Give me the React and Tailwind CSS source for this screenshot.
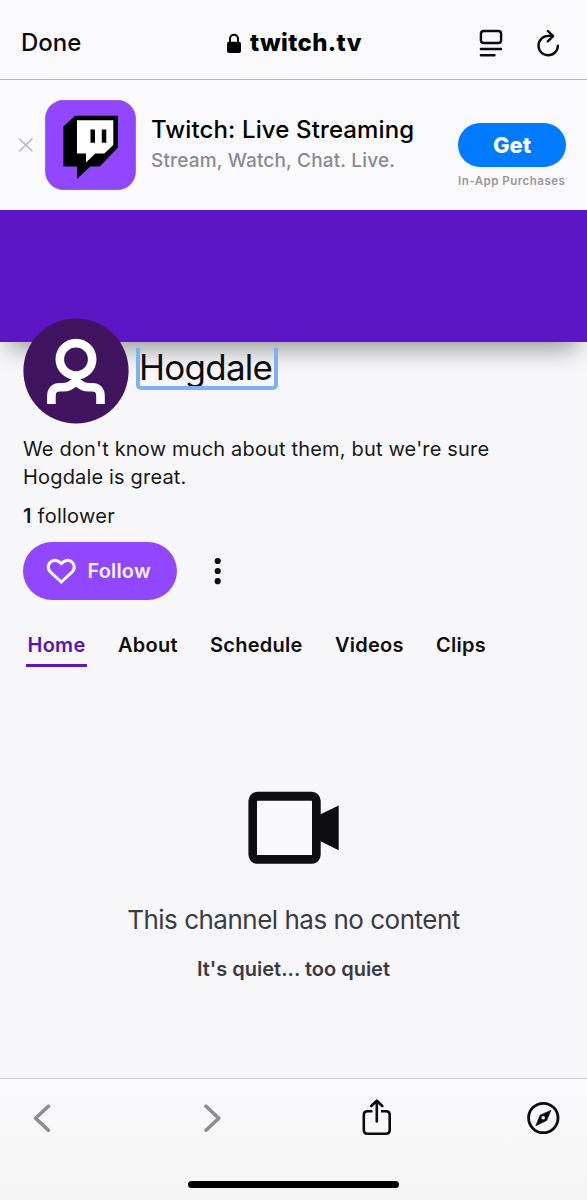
import React from 'react';

function TopBar() {
  return (
    <header className="flex h-20 shrink-0 items-center border-b border-[#b9b9bc] bg-[#fafafc] pl-[21px] pr-[27px] pt-[7px]">
      <span className="w-[205px] text-[24px] font-medium leading-[30px] text-[#0b0b0d]">Done</span>
      <svg className="mr-[8px] h-[21px] w-[16px]" viewBox="0 0 16 21">
        <path d="M4 10V5.8a4 4 0 0 1 8 0V10" fill="none" stroke="#000" strokeWidth="2" />
        <rect x="1" y="8.8" width="14" height="11.2" rx="2" />
      </svg>
      <span className="w-[229px] text-[24px] font-extrabold leading-[30px] tracking-[0.35px] text-black">twitch.tv</span>
      <svg className="h-[28px] w-[24px] shrink-0" viewBox="0 0 24 28" fill="none" stroke="#0b0b0d" strokeWidth="2.4" strokeLinecap="round">
        <rect x="1.9" y="2" width="20.2" height="12" rx="2.8" />
        <path d="M1.9 20H22M1.9 26.2H15.5" />
      </svg>
      <svg className="ml-auto h-[28px] w-[24px] shrink-0" viewBox="536 29 24 28" fill="none" stroke="#0b0b0d" strokeWidth="2.4" strokeLinecap="round" strokeLinejoin="round">
        <path d="M553 36.1Q550.5 35.6 548.1 35.9A9.7 9.7 0 1 0 557.9 45.6M547.8 31L553.1 36.2L547.8 41.4" />
      </svg>
    </header>
  );
}

function AppBanner() {
  return (
    <section className="relative z-10 flex h-[130px] shrink-0 bg-[#fafafc]">
      <svg className="ml-[18px] mt-[57px] h-[15px] w-[15px]" viewBox="0 0 15 15" stroke="#b7b7ba" strokeWidth="1.5" strokeLinecap="round">
        <path d="M1.5 2L14 14M14 2L1.5 14" />
      </svg>
      <svg className="ml-[12px] mt-[20px] h-[90px] w-[91px] shrink-0" viewBox="45 100 91 90">
        <rect x="45.5" y="100.3" width="90" height="89.4" rx="18" fill="#9146ff" stroke="#8240e6" strokeWidth=".6" />
        <path d="M75 115.8H118V147.6L99.8 166.4H90.2L77 179V166.4H63.4V126.4Z" fill="#000" />
        <path d="M77 120.3H113.3V145L104.3 153.5H95.3L86 162.5V153.5H77Z" fill="#fff" />
        <path d="M90.5 129.4H95V142.8H90.5ZM101.8 129.4H106.3V142.8H101.8Z" fill="#000" />
      </svg>
      <div className="ml-[15px] w-[307px] pt-[35px]">
        <h2 className="whitespace-nowrap text-[24px] font-medium leading-[30px] tracking-[0.12px] text-black">Twitch: Live Streaming</h2>
        <p className="mt-[4px] whitespace-nowrap text-[19px] font-medium leading-[24px] tracking-[0.17px] text-[#8b8b8e]">Stream, Watch, Chat. Live.</p>
      </div>
      <div className="w-[109px] pt-[43px]">
        <button className="block h-[44px] w-[108px] rounded-full bg-[#007aff] text-[22px] font-extrabold leading-[44px] text-white">Get</button>
        <p className="mt-[7px] whitespace-nowrap text-[11.5px] font-semibold leading-[15px] tracking-[0.5px] text-[#98989b]">In-App Purchases</p>
      </div>
    </section>
  );
}

function Avatar() {
  return (
    <svg className="relative -mt-[24px] h-[106px] w-[106px] shrink-0" viewBox="23 318 106 106">
      <circle cx="76" cy="371" r="52.6" fill="#41145f" />
      <circle cx="76" cy="359.3" r="16.2" fill="none" stroke="#fff" strokeWidth="8.6" />
      <path d="M51.4 404V396Q51.4 387.3 60 387.3H63Q70 387.3 76 381Q82 387.3 89 387.3H92Q100.5 387.3 100.5 396V404" fill="none" stroke="#fff" strokeWidth="8.6" />
    </svg>
  );
}

function Tabs() {
  return (
    <nav className="mt-[31px] flex text-[20px] font-semibold leading-[28px] tracking-[0.25px] text-[#0e0e10]">
      <span className="ml-[3px] h-[36px] w-[61px] border-b-[3px] border-[#5c16c5] text-center text-[#5416b5]">Home</span>
      <span className="ml-[31px] w-[92px]">About</span>
      <span className="w-[125px]">Schedule</span>
      <span className="w-[101px]">Videos</span>
      <span>Clips</span>
    </nav>
  );
}

function BottomBar() {
  return (
    <footer className="flex h-[122px] shrink-0 flex-col border-t border-[#cdcdd1] bg-gradient-to-b from-[#fafafc] to-[#f5f5f5]">
      <div className="flex h-[78px] items-center pl-[33px] pr-[26px]">
        <svg className="h-[28px] w-[18px]" viewBox="33 1104 18 28" fill="none" stroke="#8d8d8f" strokeWidth="3.6" strokeLinecap="round" strokeLinejoin="round">
          <path d="M48.4 1106.2L35.6 1118.2L48.4 1130.2" />
        </svg>
        <svg className="ml-[153px] h-[28px] w-[18px]" viewBox="204 1104 18 28" fill="none" stroke="#8d8d8f" strokeWidth="3.6" strokeLinecap="round" strokeLinejoin="round">
          <path d="M206 1106.2L218.8 1118.2L206 1130.2" />
        </svg>
        <svg className="ml-[140px] h-[38px] w-[30px]" viewBox="362 1099 30 38" fill="none" stroke="#0b0b0d" strokeWidth="2.6" strokeLinecap="round" strokeLinejoin="round">
          <path d="M372.5 1111.3H367.5Q363.8 1111.3 363.8 1115V1130Q363.8 1133.8 367.5 1133.8H386Q389.7 1133.8 389.7 1130V1115Q389.7 1111.3 386 1111.3H381" strokeLinecap="butt" />
          <path d="M376.8 1121.5V1101M371.3 1106L376.8 1100.7L382.3 1106" />
        </svg>
        <svg className="ml-auto h-[34px] w-[34px]" viewBox="527 1101 34 34">
          <circle cx="543.3" cy="1118" r="14.7" fill="none" stroke="#0b0b0d" strokeWidth="2.8" />
          <path fillRule="evenodd" fill="#0b0b0d" d="M551 1110.2L546.7 1120.6L535.8 1125.8L540 1115.2ZM543.2 1115.8a2 2 0 1 0 .01 0Z" stroke="#0b0b0d" strokeWidth=".6" strokeLinejoin="round" />
        </svg>
      </div>
      <div className="ml-[188px] mt-[24px] h-[7px] w-[211px] rounded-full bg-black" />
    </footer>
  );
}

export default function App() {
  return (
    <div className="flex h-[1200px] w-[587px] flex-col overflow-hidden bg-[#f7f7f9] font-['Inter',sans-serif]">
      <TopBar />
      <AppBanner />
      <div className="relative h-[132px] shrink-0 bg-[#5c16c5] shadow-[0_16px_24px_-10px_rgba(0,0,0,0.42)]" />
      <main className="flex min-h-0 flex-1 flex-col pl-[23px]">
        <div className="flex h-[82px]">
          <Avatar />
          <div className="relative ml-[7px] mt-[6px] h-[42px] w-[142px] overflow-hidden rounded-b-[5px] border-x-4 border-b-4 border-[#7db2f2]">
            <h1 className="-ml-px -mt-[3px] whitespace-nowrap text-[35px] font-normal leading-[44px] tracking-[-0.75px] text-[#0e0e10]">Hogdale</h1>
          </div>
        </div>
        <p className="mt-[11px] w-[480px] text-[20px] leading-[28px] tracking-[0.17px] text-[#18181b]">
          We don't know much about them, but we're sure<br />Hogdale is great.
        </p>
        <p className="mt-[11px] text-[20px] leading-[28px] tracking-[0.25px] text-[#18181b]"><b className="font-semibold">1</b> follower</p>
        <div className="mt-[12px] flex h-[58px] items-center">
          <button className="flex h-[58px] w-[154px] items-center rounded-full bg-[#9146ff] pl-[23px] text-[20px] font-semibold tracking-[0.15px] text-[#f7f0ff]">
            <svg className="mr-[11.5px] h-[26px] w-[30px]" viewBox="46 558 30 26" fill="none" stroke="#fff" strokeWidth="3" strokeLinejoin="miter">
              <path d="M61.3 563.5L59.5 562Q54 558.5 50 562.5Q46.5 567 50 571.5L61.3 582L72.6 571.5Q76 567 72.5 562.5Q68.5 558.5 63.1 562Z" />
            </svg>
            Follow
          </button>
          <svg className="ml-[37px] h-[28px] w-[8px]" viewBox="0 0 8 28" fill="#0e0e10">
            <circle cx="3.7" cy="4" r="3.1" /><circle cx="3.7" cy="14" r="3.1" /><circle cx="3.7" cy="24.2" r="3.1" />
          </svg>
        </div>
        <Tabs />
        <div className="-ml-[23px] mt-[124px] flex flex-col items-center">
          <svg className="h-[74px] w-[92px]" viewBox="248 791 92 74">
            <rect x="252.9" y="796.3" width="63.3" height="63" rx="4.5" fill="none" stroke="#0e0e10" strokeWidth="9" />
            <path d="M257 801H312V855H257Z" fill="#f9f9fb" />
            <path d="M320 814.5L338.7 805.5V850.2L320 841Z" fill="#0e0e10" />
          </svg>
          <h2 className="mt-[38px] text-[26px] font-normal leading-[34px] tracking-[-0.5px] text-[#3b3b44]">This channel has no content</h2>
          <p className="mt-[18px] text-[20px] font-semibold leading-[28px] text-[#3b3b44]">It's quiet... too quiet</p>
        </div>
      </main>
      <BottomBar />
    </div>
  );
}
